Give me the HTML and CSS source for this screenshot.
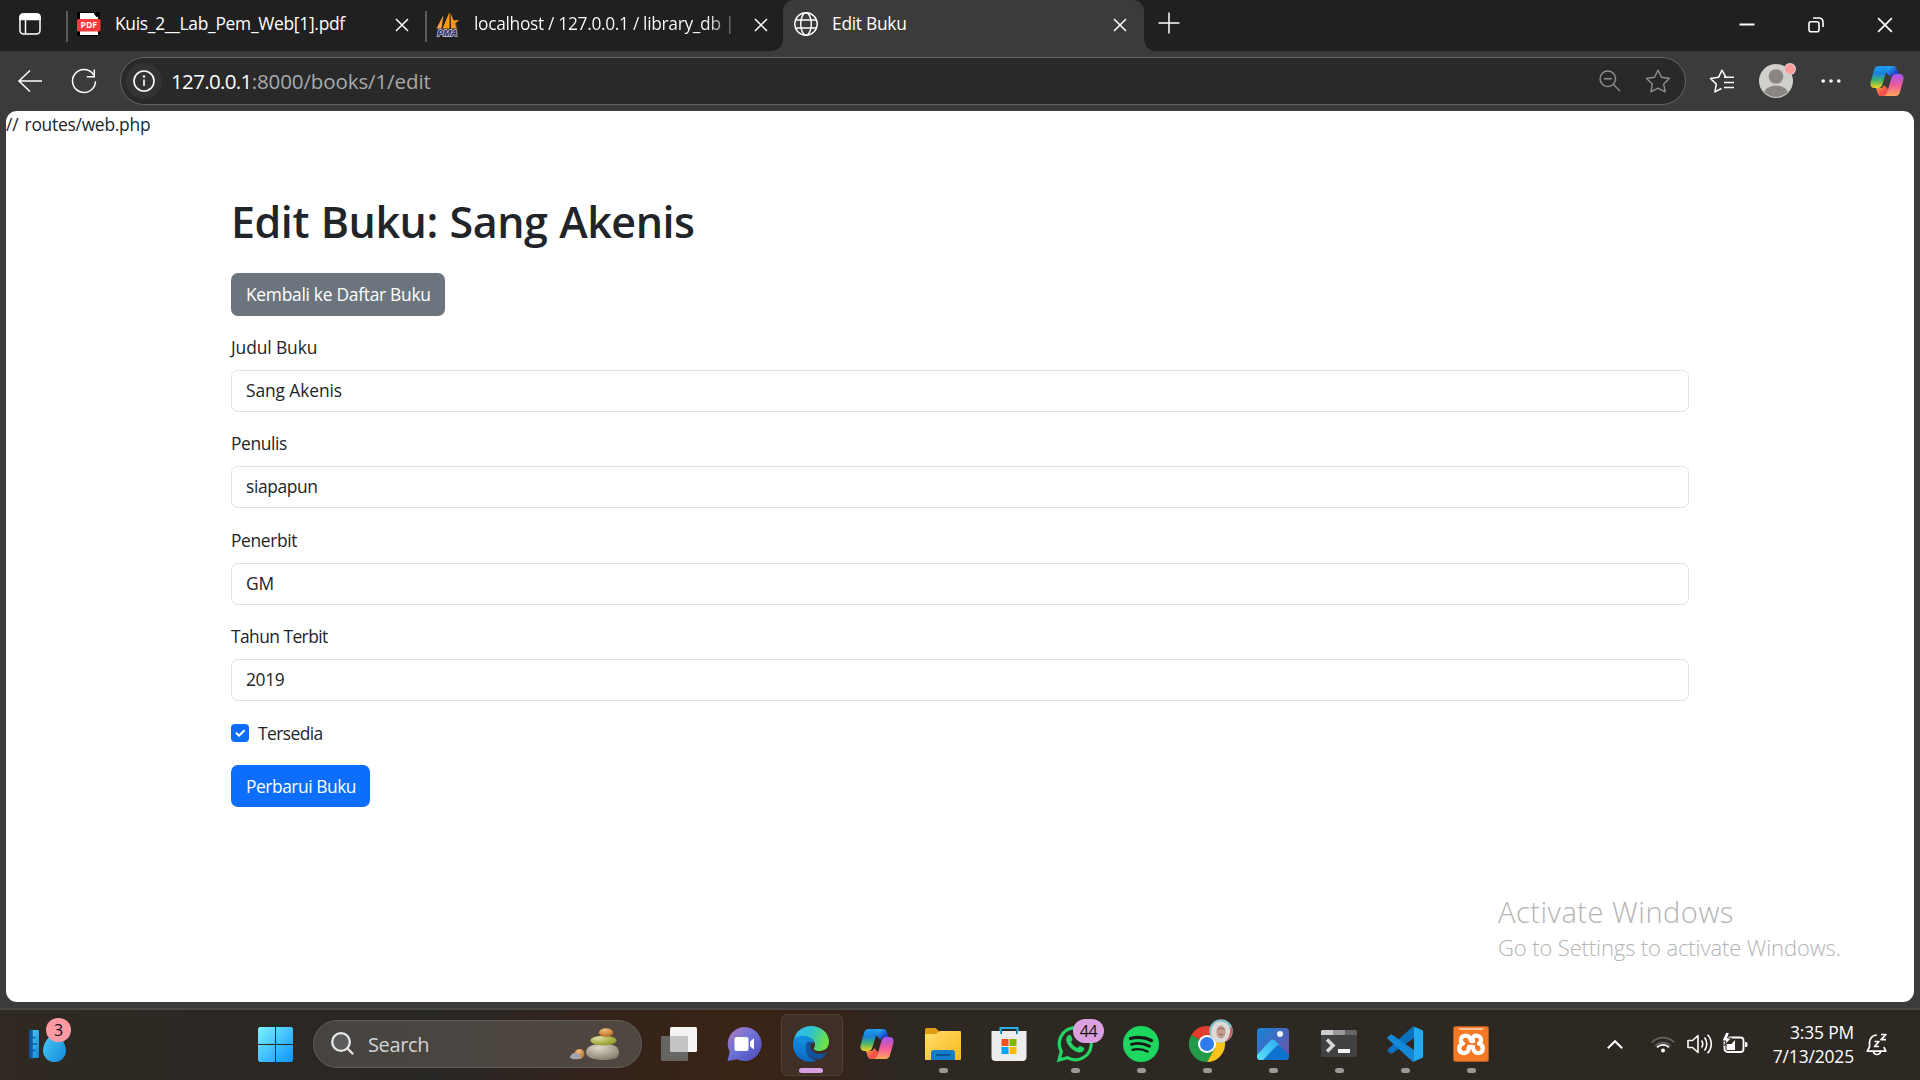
FILE: index.html
```html
<!DOCTYPE html>
<html lang="id">
<head>
<meta charset="utf-8">
<title>Edit Buku</title>
<link rel="stylesheet" href="styles.css">
</head>
<body>
<svg class="defs" width="0" height="0" aria-hidden="true">
  <defs>
    <linearGradient id="cpBlue" x1="0" y1="0" x2="0" y2="1"><stop offset="0" stop-color="#1d9bf0"/><stop offset=".35" stop-color="#1683dd"/><stop offset=".65" stop-color="#45b36b"/><stop offset="1" stop-color="#f4d31f"/></linearGradient>
    <linearGradient id="cpPink" x1="0" y1="0" x2="0" y2="1"><stop offset="0" stop-color="#a355f2"/><stop offset=".5" stop-color="#ee5a9b"/><stop offset="1" stop-color="#ffa65a"/></linearGradient>
    <linearGradient id="cpNavy" x1="0" y1="0" x2="1" y2="1"><stop offset="0" stop-color="#27c3f3"/><stop offset=".7" stop-color="#1a45cf"/></linearGradient>
    <linearGradient id="cpRed" x1="0" y1="0" x2="1" y2="1"><stop offset="0" stop-color="#ffb13d"/><stop offset=".6" stop-color="#f2504b"/></linearGradient>
    <symbol id="copilot" viewBox="0 0 36 36">
      <path d="M18 3h6.200c2 0 3 1 3.500 2.600L29.500 11H25c-2 0-3 1-3.600 3L17 9z" fill="url(#cpNavy)"/>
      <path d="M18 33h-5.800c-2 0-3-1-3.500-2.600L7 25h4.500c2 0 3-1 3.600-3L19 26z" fill="url(#cpRed)"/>
      <path d="M9.500 3h12c-2.300 0-3.100 1.500-3.800 4L13.500 21c-.8 2.600-2 4-4.500 4H5.500C1.800 25 .8 22 1.800 18.500L5 7C5.800 4.300 7 3 9.500 3z" fill="url(#cpBlue)"/>
      <path d="M26.500 33h-12c2.300 0 3.100-1.500 3.800-4l4.200-14c.8-2.600 2-4 4.500-4h3.500c3.700 0 4.700 3 3.700 6.500L31 29c-.8 2.700-2 4-4.500 4z" fill="url(#cpPink)"/>
    </symbol>
    <symbol id="cross" viewBox="0 0 14 14"><path d="M1 1l12 12M13 1L1 13" stroke="#fff" stroke-width="1.5" fill="none"/></symbol>
  </defs>
</svg>

<header class="tabstrip">
  <div class="tab-actions">
    <svg width="22" height="22" viewBox="0 0 22 22" fill="none" stroke="#fff" stroke-width="1.500"><rect x="1" y="1" width="20" height="20" rx="3.500"/><path d="M1 4a3 3 0 0 1 3-3h14a3 3 0 0 1 3 3v2.500H1z" fill="#fff"/><path d="M6.500 6v15"/></svg>
  </div>
  <div class="tab tab-first">
    <svg class="favicon" width="24" height="24" viewBox="0 0 24 24"><path d="M0 0h23v24H0z" fill="#000"/><path d="M3 1h13l5 5v17H3z" fill="#fff"/><path d="M15 0h7v7z" fill="#000"/><path d="M16.500 1v4.500H21" stroke="#fff" fill="none"/><rect x="0" y="7" width="23.500" height="12.500" rx="1.500" fill="#f93a3c"/><text x="11.700" y="16.400" text-anchor="middle" class="pdf-mark">PDF</text></svg>
    <span class="tab-title t1">Kuis_2__Lab_Pem_Web[1].pdf</span>
    <svg class="tab-close" width="14" height="14"><use href="#cross"/></svg>
  </div>
  <div class="tab tab-second">
    <svg class="favicon" width="25" height="25" viewBox="0 0 25 25"><path d="M8.500 3L1.500 16.500l5 0z" fill="#f6a34a"/><path d="M14.500 0L7.500 16.500h7z" fill="#f89c0e"/><path d="M15.500 1l.5 15.500h6z" fill="#f0912a"/><path d="M17 8.500l7-.5-4 4 4.500 4z" fill="#f89c0e"/><text x="12.200" y="24" text-anchor="middle" class="pma-mark">PMA</text></svg>
    <span class="tab-title t2">localhost / 127.0.0.1 / library_db |</span>
    <svg class="tab-close" width="14" height="14"><use href="#cross"/></svg>
  </div>
  <div class="tab tab-active">
    <svg class="favicon" width="24" height="24" viewBox="0 0 24 24" fill="none" stroke="#fff" stroke-width="1.400"><circle cx="12" cy="12" r="11.200"/><ellipse cx="12" cy="12" rx="5.300" ry="11.200"/><path d="M1.600 8h20.800M1.600 16h20.800"/></svg>
    <span class="tab-title t3">Edit Buku</span>
    <svg class="tab-close" width="14" height="14"><use href="#cross"/></svg>
  </div>
  <svg class="new-tab" width="22" height="22" viewBox="0 0 22 22" stroke="#fff" stroke-width="1.500"><path d="M11 .5v21M.5 11h21"/></svg>
  <div class="window-buttons">
    <svg width="16" height="16" viewBox="0 0 16 16"><path d="M.5 7.500h15" stroke="#fff" stroke-width="2"/></svg>
    <svg width="16" height="16" viewBox="0 0 16 16" fill="none" stroke="#fff" stroke-width="1.600"><rect x="1" y="4.800" width="10" height="10" rx="2"/><path d="M5 1h6.200A3.800 3.800 0 0 1 15 4.800V10"/></svg>
    <svg width="16" height="16" viewBox="0 0 14 14"><use href="#cross"/></svg>
  </div>
</header>

<div class="toolbar">
  <svg class="nav-back" width="26" height="24" viewBox="0 0 26 24" fill="none" stroke="#fff" stroke-width="1.500"><path d="M25 12H1.500M13 1.500L2 12l11 10.500"/></svg>
  <svg class="nav-reload" width="26" height="26" viewBox="0 0 26 26" fill="none" stroke="#fff" stroke-width="1.500"><path d="M24.500 13.200A11.500 11.500 0 1 1 22.800 7"/><path d="M23.300 1.500v7.200h-7.500"/></svg>
  <div class="address">
    <div class="site-info"><svg width="22" height="22" viewBox="0 0 22 22" fill="none" stroke="#fff" stroke-width="1.600"><circle cx="11" cy="11" r="10"/><path d="M11 9.500V16"/><circle cx="11" cy="6.500" r=".5"/></svg></div>
    <span class="url"><span class="host">127.0.0.1</span>:8000/books/1/edit</span>
    <svg class="zoom-icon" width="22" height="22" viewBox="0 0 22 22" fill="none" stroke="#8f8f8f" stroke-width="1.400"><circle cx="8.800" cy="8.800" r="7.800"/><path d="M14.500 14.500l6.500 6.500M5 8.800h7.600"/></svg>
    <svg width="26" height="24" viewBox="0 0 26 24" fill="none" stroke="#8f8f8f" stroke-width="1.400" stroke-linejoin="round"><path d="M13 1.200l3.500 7.100 8 1.200-5.800 5.600 1.400 7.800-7.100-3.700-7.100 3.700 1.400-7.800L1.500 9.500l8-1.200z"/></svg>
  </div>
  <svg class="favs" width="26" height="24" viewBox="0 0 26 24" fill="none" stroke="#fff" stroke-width="1.500" stroke-linejoin="round"><path d="M20 8.200h-3.200L13 1.200l-3.500 7.100-8 1.200 5.800 5.600-1.400 7.800 6.500-3.400M15 8.200h10M15 13.400h10M15 18.400h10"/></svg>
  <svg class="profile" width="38" height="36" viewBox="0 0 38 36"><circle cx="17" cy="19" r="17" fill="#d1cfcb"/><clipPath id="face"><circle cx="17" cy="19" r="16"/></clipPath><g clip-path="url(#face)" fill="#8a8683"><circle cx="17" cy="14.500" r="7.300"/><ellipse cx="17" cy="33" rx="12.500" ry="9.500"/></g><circle cx="31" cy="7" r="6" fill="#d6d4d1"/><circle cx="31" cy="7" r="5" fill="#ff9d9d"/></svg>
  <svg class="more" width="20" height="4" viewBox="0 0 20 4" fill="#fff"><circle cx="2.200" cy="2" r="1.800"/><circle cx="10" cy="2" r="1.800"/><circle cx="17.800" cy="2" r="1.800"/></svg>
  <svg class="sidebar-copilot" width="36" height="36"><use href="#copilot"/></svg>
</div>

<main class="viewport">
  <div class="stray">// routes/web.php</div>
  <div class="container">
    <h1>Edit Buku: Sang Akenis</h1>
    <a class="btn btn-secondary">Kembali ke Daftar Buku</a>
    <form>
      <div class="field"><label class="wide">Judul Buku</label><div class="control wide">Sang Akenis</div></div>
      <div class="field"><label>Penulis</label><div class="control">siapapun</div></div>
      <div class="field"><label>Penerbit</label><div class="control wide">GM</div></div>
      <div class="field"><label class="tight">Tahun Terbit</label><div class="control">2019</div></div>
      <div class="check"><svg width="18" height="18" viewBox="0 0 18 18"><rect width="18" height="18" rx="4" fill="#0d6efd"/><path d="M5.500 9.300l2.500 2.400 5-5" fill="none" stroke="#fff" stroke-width="2" stroke-linecap="round" stroke-linejoin="round"/></svg><span class="tight">Tersedia</span></div>
      <a class="btn btn-primary">Perbarui Buku</a>
    </form>
  </div>
  <aside class="activate"><div class="activate-title">Activate Windows</div><div class="activate-text">Go to Settings to activate Windows.</div></aside>
</main>

<footer class="taskbar">
  <div class="widgets">
    <svg width="38" height="34" viewBox="0 0 38 34"><defs><linearGradient id="wd" x1="0" y1="0" x2="1" y2="1"><stop offset="0" stop-color="#4fd0f7"/><stop offset="1" stop-color="#1187dc"/></linearGradient></defs><rect x="0" y="2" width="9" height="28" rx="1" fill="url(#wd)"/><path d="M0 3v26l2 1V2zM2 9.500h3.500M2 16h5M2 22.500h3.500" stroke="#0b5ca8" stroke-width="1.600" fill="#0b5ca8"/><path d="M24.500 2c4 6 11.500 12 11.500 20.500a11.500 11.500 0 0 1-23 0C13 14 20.500 8 24.500 2z" fill="url(#wd)"/></svg>
    <span class="badge badge-news">3</span>
  </div>
  <div class="launcher">
    <div class="start"><svg width="35" height="35" viewBox="0 0 35 35"><defs><linearGradient id="wn" x1="0" y1="0" x2="1" y2="1"><stop offset="0" stop-color="#7df1ff"/><stop offset="1" stop-color="#0a94ff"/></linearGradient></defs><path d="M1.500 0H17v17H0V1.500zM18 0h15.500L35 1.500V17H18zM0 18h17v17H1.500L0 33.500zM18 18h17v15.500L33.500 35H18z" fill="url(#wn)"/></svg></div>
    <div class="search">
      <svg width="24" height="24" viewBox="0 0 24 24" fill="none" stroke="#e8e8e8" stroke-width="2.300" stroke-linecap="round"><circle cx="10" cy="10" r="8.800" fill="#5b5b5b"/><path d="M16.500 16.500l5 5"/></svg>
      <span class="search-label">Search</span>
      <svg class="stones" width="50" height="33" viewBox="0 0 50 33"><defs><radialGradient id="s1" cx=".4" cy=".25" r=".8"><stop offset="0" stop-color="#e0d8c6"/><stop offset="1" stop-color="#81796a"/></radialGradient><radialGradient id="s2" cx=".3" cy=".25" r=".8"><stop offset="0" stop-color="#dcdca6"/><stop offset="1" stop-color="#8f9a18"/></radialGradient><radialGradient id="s3" cx=".4" cy=".2" r=".8"><stop offset="0" stop-color="#f3bd80"/><stop offset="1" stop-color="#b66a1d"/></radialGradient></defs><ellipse cx="9.500" cy="26" rx="5" ry="5" fill="url(#s3)"/><path d="M0 29c2-5 6-5 9-3l3 3c0 3-12 3-12 0z" fill="#a3a5a8"/><path d="M16 24c1-7 8-8 17-8 11 0 16 2 16 9 0 6-7 7-15 7-10 0-18-2-18-8z" fill="url(#s1)"/><ellipse cx="33.500" cy="12.500" rx="13" ry="4.800" fill="url(#s2)"/><ellipse cx="36" cy="4.500" rx="7.200" ry="4.300" fill="url(#s3)"/></svg>
    </div>
    <div class="app"><svg width="36" height="36" viewBox="0 0 36 36"><rect x="9" y="1" width="27" height="25" rx="1.500" fill="#f4f4f4"/><rect x="0" y="10" width="27" height="25" rx="1.500" fill="#666564"/><path d="M9 10h18v16H10l-1-1z" fill="#c4c4c4"/></svg></div>
    <div class="app"><svg width="36" height="36" viewBox="0 0 36 36"><defs><linearGradient id="ch" x1="0" y1="0" x2="1" y2="1"><stop offset="0" stop-color="#b478b8"/><stop offset=".45" stop-color="#6d73d8"/><stop offset="1" stop-color="#4a48b8"/></linearGradient></defs><path d="M17.500 1a17 17 0 1 1-7.500 32.200L.5 35l2.200-9A17 17 0 0 1 17.500 1z" fill="url(#ch)"/><rect x="7.500" y="11" width="14" height="14" rx="2" fill="#fff"/><path d="M23 15.500l4-3.200v11.200l-4-3.200z" fill="#fff"/></svg></div>
    <div class="app app-active"><svg width="36" height="36" viewBox="0 0 36 36"><defs><linearGradient id="e1" x1="0" y1="0" x2="1" y2=".3"><stop offset="0" stop-color="#35b8f1"/><stop offset=".5" stop-color="#2cc3d2"/><stop offset="1" stop-color="#6be04a"/></linearGradient><linearGradient id="e2" x1="0" y1="0" x2="0" y2="1"><stop offset="0" stop-color="#1490df"/><stop offset="1" stop-color="#0b69c7"/></linearGradient></defs><path d="M1 13C3 5 10 0 18 0c10 0 18 7 18 15.500 0 6-4 9.500-9.500 9.500-4 0-6.500-1.500-5.500-3 2.500-4 .5-8-4-10C11 9.500 5 10 1 13z" fill="url(#e1)"/><path d="M1 13c5-4 12-4 16.500-1 2.500 1.500 4 4 3.900 6-3-4-8.400-1.500-8.400 4 0 7 5 12 11 12.500C12 39 0 31 0 18.500 0 16.500.4 14.500 1 13z" fill="url(#e2)"/><path d="M14.500 16c-5 9 2 19 13 17 3-1.500 5-4 6-5.500.4-.7 0-1-.7-.7-7 3-14 0-15.300-5.300-.4-1.600.2-3.500 1.500-4.800-1.700-1.400-3.400-1.400-4.500-.7z" fill="#11529e"/></svg><i class="dot"></i></div>
    <div class="app"><svg width="36" height="36"><use href="#copilot"/></svg></div>
    <div class="app"><svg width="36" height="36" viewBox="0 0 36 36"><defs><linearGradient id="fo" x1="0" y1="0" x2="1" y2="1"><stop offset="0" stop-color="#ffdd6e"/><stop offset="1" stop-color="#fbb91a"/></linearGradient></defs><path d="M0 4a2 2 0 0 1 2-2h8.500l4 3.500V9H0z" fill="#e29b12"/><path d="M0 8h11l4-3h20a1 1 0 0 1 1 1v27a1 1 0 0 1-1 1H1a1 1 0 0 1-1-1z" fill="url(#fo)"/><path d="M6 34V27a3 3 0 0 1 3-3h18a3 3 0 0 1 3 3v7z" fill="#137ccb"/><path d="M11 29h14" stroke="#075493" stroke-width="2"/></svg><i class="dot"></i></div>
    <div class="app"><svg width="36" height="36" viewBox="0 0 36 36"><path d="M9.500 8V2h17v6" fill="none" stroke="#28aee9" stroke-width="2"/><path d="M.5 5H9v3h2V5h14v3h2V5h8.500v26a4 4 0 0 1-4 4h-27a4 4 0 0 1-4-4z" fill="#ededed"/><path d="M10.500 13h7v7h-7z" fill="#f25022"/><path d="M18.500 13h7v7h-7z" fill="#7fba00"/><path d="M10.500 21h7v7h-7z" fill="#00a4ef"/><path d="M18.500 21h7v7h-7z" fill="#ffb900"/></svg></div>
    <div class="app"><svg width="36" height="36" viewBox="0 0 36 36"><path d="M2 34l2.300-8.500A16 16 0 1 1 10.500 31.700z" fill="none" stroke="#25d366" stroke-width="3.200"/><path d="M11 9.500c1-1 2.500-.8 3 .3l1.400 3.200c.3.700-.3 1.700-1.400 2.900 1.600 3 3.600 4.800 6.600 6 1.200-1.500 1.800-2.300 2.700-1.900l3.500 1.700c1 .5.200 3-1.200 4-3 2-8-.3-11.600-3.500C10.500 19 7 13 11 9.500z" fill="#25d366"/></svg><span class="badge badge-chat">44</span><i class="dot"></i></div>
    <div class="app"><svg width="36" height="36" viewBox="0 0 36 36"><circle cx="18" cy="18" r="18" fill="#1ed760"/><g fill="none" stroke="#141a15" stroke-linecap="round"><path d="M7.500 12.500c7-2 14.500-1.300 21 2" stroke-width="3.300"/><path d="M8.500 18.300c6-1.700 12.500-1 18 2" stroke-width="2.800"/><path d="M9.500 23.800c5-1.300 10.300-.8 15 1.800" stroke-width="2.300"/></g></svg><i class="dot"></i></div>
    <div class="app"><svg width="45" height="43" viewBox="0 -7 45 43" class="chrome"><path d="M18 18L2.400 9A18 18 0 0 1 33.600 9z" fill="#e33b2e"/><path d="M18 18L2.400 9A18 18 0 0 0 18 36l7.800-13.500z" fill="#229a48"/><path d="M18 9h15.600A18 18 0 0 1 18 36l7.800-13.500z" fill="#fcc31e"/><circle cx="18" cy="18" r="9" fill="#fff"/><circle cx="18" cy="18" r="7" fill="#2f7cf0"/><circle cx="32" cy="5" r="11.800" fill="#7fbfc6"/><path d="M43 1a11.800 11.800 0 0 1-8 15l-1-10z" fill="#c9605f"/><path d="M24 14c-4-8-1-19 8-18.500 8 .5 11 8 8 14.500-2 5-5 6.500-8 6.500s-6-.5-8-2.500z" fill="#dcd9d7"/><ellipse cx="32" cy="6" rx="4.600" ry="6.500" fill="#c49c8c"/><path d="M28.500 3.500c2-1.500 5-1.500 7 0M30 8.500h4" stroke="#8f6c61" fill="none"/></svg><i class="dot"></i></div>
    <div class="app"><svg width="36" height="36" viewBox="0 0 36 36"><defs><linearGradient id="p1" x1="0" y1="0" x2="1" y2=".8"><stop offset="0" stop-color="#1584d9"/><stop offset="1" stop-color="#6a54a9"/></linearGradient><linearGradient id="p2" x1="0" y1="1" x2="1" y2="0"><stop offset="0" stop-color="#5be4ff"/><stop offset="1" stop-color="#2aa9ee"/></linearGradient></defs><rect x="2" y="2" width="32" height="32" rx="3.500" fill="url(#p1)"/><path d="M8 34l13-13.500c1.500-1.500 3-1.500 4.500 0L34 29v1.500a3.500 3.500 0 0 1-3.500 3.500z" fill="#0c73cf"/><path d="M2 29L15.500 14.500c1.500-1.500 3-1.500 4.500 0l4.500 5c-1.500-.5-2.500 0-3.500 1L8 34H5.500A3.500 3.500 0 0 1 2 30.500z" fill="url(#p2)"/><circle cx="25" cy="8" r="3" fill="#f2f2f7"/></svg><i class="dot"></i></div>
    <div class="app"><svg width="36" height="36" viewBox="0 0 36 36"><rect x="0" y="4" width="36" height="27" rx="1.500" fill="#414141"/><path d="M0 9V5.500A1.500 1.500 0 0 1 1.500 4H12v5z" fill="#ccc"/><path d="M12 4h12v5H12z" fill="#999"/><path d="M24 4h10.500A1.500 1.500 0 0 1 36 5.500V9H24z" fill="#666"/><path d="M6 13.500l6 6-6 6" fill="none" stroke="#d8d8d8" stroke-width="3.500"/><rect x="17" y="23" width="12" height="4" fill="#f2f2f2"/></svg><i class="dot"></i></div>
    <div class="app"><svg width="36" height="36" viewBox="0 0 36 36"><path d="M27 9v3L5.500 27.200c-.8.600-1.700.6-2.400 0L.6 25.300a1.200 1.200 0 0 1 0-1.800L25.500.8 27 1z" fill="#0a72bd"/><path d="M5.500 9C4.700 8.400 3.800 8.400 3.100 9L.6 11a1.200 1.200 0 0 0 0 1.800L25.500 35.500 27 36V24z" fill="#1388d6"/><path d="M26 .2L35 4a1.500 1.500 0 0 1 1 1.500v25a1.500 1.500 0 0 1-1 1.500l-9 4c1-.5 1-1 1-2V2c0-1 0-1.300-1-1.800z" fill="#24a8f2"/></svg><i class="dot"></i></div>
    <div class="app"><svg width="36" height="36" viewBox="0 0 36 36"><rect x=".5" y=".5" width="35" height="35" rx="2" fill="#f57824" stroke="#b55a22"/><path d="M5 2h26l-2 2H7z" fill="#fbc59c"/><path d="M22 14.800h-4c-1-4.800-4-5.800-7-4.800-4 1-4 6-1 7.500C5 19 5 26 10 27c4 .5 6-2 6-6.200h4c0 4.200 2 6.700 6 6.200 5-1 5-8 0-9.500 3-1.500 3-6.500-1-7.500-3-1-6 0-7 4.800" fill="none" stroke="#fff" stroke-width="4.200" stroke-linejoin="round"/></svg><i class="dot"></i></div>
  </div>
  <div class="tray">
    <svg class="chev" width="16" height="9" viewBox="0 0 16 9" fill="none" stroke="#fff" stroke-width="2"><path d="M.8 8.200L8 1.200l7.200 7"/></svg>
    <svg class="wifi" width="24" height="18" viewBox="0 0 24 18" fill="none" stroke-width="1.700"><path d="M.8 7.500a15.500 15.500 0 0 1 22.400 0M4.300 10.800a11 11 0 0 1 15.400 0" stroke="#66625d"/><path d="M6 12.300a8.500 8.500 0 0 1 12 0" stroke="#fff"/><circle cx="12" cy="15.500" r="2" fill="#fff"/></svg>
    <svg class="sound" width="25" height="20" viewBox="0 0 25 20" fill="none" stroke="#fff" stroke-width="1.600" stroke-linejoin="round"><path d="M1 6.500h4.500L11 1.500v17l-5.500-5H1z"/><path d="M14.500 6.500c1.500 2 1.500 5 0 7M17.500 3.500c3 3.500 3 9.500 0 13M20.500.8c5 5 5 13.400 0 18.400"/></svg>
    <svg class="battery" width="25" height="20" viewBox="0 0 25 20"><rect x="1.500" y="3.500" width="19" height="14.500" rx="3" fill="none" stroke="#fff" stroke-width="1.800"/><path d="M3.500 10h5l3.500-4v10H3.500z" fill="#fff"/><path d="M22 8h1.500l1 1v3l-1 1H22z" fill="#fff"/><path d="M3-2L-1 7h4L1.500 11.500l7-7.500h-4L6.500-1z" fill="#fff" stroke="#2d2823" stroke-width="1"/></svg>
    <div class="clock"><span>3:35 PM</span><span>7/13/2025</span></div>
    <svg class="bell" width="22" height="23" viewBox="0 0 22 23" fill="none" stroke="#fff" stroke-width="1.700" stroke-linejoin="round"><path d="M11 2a7.500 7.500 0 0 0-7.500 7.500V14L1.200 18.200h18.600L17.800 14M7.500 18.500c.5 4 6.500 4 7 0"/><path d="M8.500 8.500h4.500l-4.500 5H13M15 1.500h5l-5 5.200h5"/></svg>
  </div>
</footer>
</body>
</html>
```
FILE: styles.css
```css
* { box-sizing: border-box; }
body {
  margin: 0;
  width: 1920px;
  height: 1080px;
  overflow: hidden;
  display: flex;
  flex-direction: column;
  background: #3b3b3b;
  font-family: "Open Sans", "Noto Sans", sans-serif;
  font-size: 17.400px;
  letter-spacing: -.28px;
  color: #212529;
  white-space: nowrap;
}
svg { display: block; flex: none; overflow: visible; }
.defs { position: absolute; }

.tabstrip { height: 51px; display: flex; background: #202020; color: #fff; flex: none; }
.tab-actions { width: 66px; padding: 13px 0 0 19px; }
.tab { display: flex; position: relative; }
.tab-first { width: 359px; padding-left: 11px; }
.tab-second { width: 358px; padding-left: 10px; }
.tab-first::before, .tab-second::before { content: ""; position: absolute; left: 0; top: 11px; width: 2px; height: 31px; background: #5a5a5a; }
.tab .favicon { margin-top: 12px; }
.tab-title { margin-left: 14px; line-height: 47px; }
.tab-close { position: absolute; right: 16px; top: 18px; }
.tab-second .tab-close { right: 15px; }
.tab-active .tab-close { right: 17px; }
.t2 { letter-spacing: -.33px; background: linear-gradient(90deg, #fff 232px, #8a8a8a 252px, #555 262px); -webkit-background-clip: text; background-clip: text; color: transparent; }
.tab-active { width: 361px; padding-left: 11px; background: #3b3b3b; border-radius: 11px 11px 0 0; }
.tab-active::before, .tab-active::after { content: ""; position: absolute; bottom: 0; width: 11px; height: 11px; }
.tab-active::before { left: -11px; background: radial-gradient(circle at 0 0, transparent 10.500px, #3b3b3b 11px); }
.tab-active::after { right: -11px; background: radial-gradient(circle at 100% 0, transparent 10.500px, #3b3b3b 11px); }
.new-tab { margin: 12px 0 0 14px; }
.window-buttons { margin: 17px 27px 0 auto; display: flex; gap: 53px; }
.pdf-mark { font: 700 8.500px "Open Sans", sans-serif; fill: #fff; letter-spacing: 0; }
.pma-mark { font: italic 700 9.500px "Open Sans", sans-serif; fill: #2b2c6a; stroke: #c9c9e0; stroke-width: 1.500px; paint-order: stroke; letter-spacing: 0; }

.toolbar { height: 60px; display: flex; align-items: center; flex: none; padding-left: 17px; }
.nav-reload { margin-left: 28px; }
.address { width: 1566px; height: 48px; margin-left: 23px; border: 1.500px solid #646464; border-radius: 24px; background: #292929; display: flex; align-items: center; padding: 0 14px 0 5px; }
.site-info { width: 36px; height: 36px; border-radius: 50%; background: #333; display: grid; place-items: center; }
.url { margin: 0 auto 0 9px; font-size: 20.500px; letter-spacing: -.1px; color: #a9a9a9; }
.host { color: #fff; letter-spacing: -.65px; }
.zoom-icon { margin-right: 24px; }
.favs { margin-left: 23px; }
.profile { margin-left: 24px; margin-top: -2px; }
.more { margin-left: 24px; }
.sidebar-copilot { margin-left: 28px; }

.viewport { position: relative; width: 1908px; height: 891px; margin: 0 6px; flex: none; background: #fff; border-radius: 11px; overflow: hidden; }
.stray { height: 27px; line-height: 27px; letter-spacing: -.25px; word-spacing: 2px; }
.container { margin: 54px 225px 0; }
h1 { margin: 0; padding-top: 3px; height: 81px; font-size: 43px; font-weight: 600; line-height: 54px; letter-spacing: -.45px; word-spacing: 1px; }
.btn { display: block; height: 42px; line-height: 42px; padding-left: 15px; border-radius: 7px; color: #fff; }
.btn-secondary { width: 214px; height: 43px; background: #6c757d; margin-bottom: 18px; }
.btn-primary { width: 139px; background: #0d6efd; letter-spacing: -.46px; }
.field { margin-bottom: 18.330px; }
.field label { display: block; height: 27px; line-height: 27px; margin-bottom: 9px; letter-spacing: -.37px; }
.control { height: 42px; line-height: 39px; padding: 0 14px; border: 1px solid #dee2e6; border-radius: 7px; letter-spacing: -.37px; }
.field .wide { letter-spacing: -.1px; }
.field .tight, .check .tight { letter-spacing: -.56px; }
.check { display: flex; align-items: center; gap: 9px; height: 27px; margin-bottom: 18.700px; }
.activate { position: absolute; left: 1492px; top: 780px; color: #b4b4b4; font-weight: 300; }
.activate-title { font-size: 29px; line-height: 42px; letter-spacing: .52px; }
.activate-text { font-size: 22px; line-height: 28px; letter-spacing: -.12px; }

.taskbar { height: 72px; margin-top: 6px; flex: none; display: flex; border-top: 2px solid #474642; background: linear-gradient(90deg, #2f2921 0, #2b2824 250px, #292725 440px, #33231b 600px, #3a2416 740px, #37231a 820px, #2d2822 900px, #2d2822 100%); color: #fff; }
.widgets { position: relative; width: 242px; padding: 18px 0 0 30px; }
.badge { position: absolute; height: 24px; line-height: 24px; border-radius: 12px; color: #111; text-align: center; font-size: 16px; }
.badge-news { left: 46px; top: 8px; width: 25px; background: #fe9aa4; }
.badge-chat { left: 31px; top: 9px; width: 31px; background: #dba0e2; }
.launcher { display: flex; }
.start { width: 71px; padding: 17px 0 0 16px; }
.search { width: 329px; height: 48px; margin: 10px 4px 0 0; padding: 0 21px 0 17px; border: 1px solid #605d59; border-radius: 24px; background: linear-gradient(90deg, #464441, #504640); display: flex; align-items: center; }
.search-label { margin-left: 13px; font-size: 20px; letter-spacing: -.35px; color: #d4d4d4; }
.stones { margin-left: auto; }
.app { width: 66px; height: 70px; padding: 16px 0 0 15px; position: relative; }
.chrome { margin-top: -7px; }
.app-active::before { content: ""; position: absolute; left: 3px; top: 4px; width: 60px; height: 60px; border: 1px solid #504036; border-radius: 6px; background: #402f27; }
.app-active svg { position: relative; }
.dot { position: absolute; left: 29px; bottom: 7px; width: 9px; height: 5px; border-radius: 3px; background: #9b9995; }
.app-active .dot { left: 21px; width: 24px; background: #dba0e2; }
.tray { margin-left: auto; display: flex; align-items: center; padding: 0 32px 2px 0; }
.wifi { margin-left: 28px; }
.sound { margin-left: 12px; }
.battery { margin-left: 11px; }
.clock { width: 106px; margin: -1px 12px 0 0; display: flex; flex-direction: column; align-items: flex-end; line-height: 24px; letter-spacing: -.13px; }
```
